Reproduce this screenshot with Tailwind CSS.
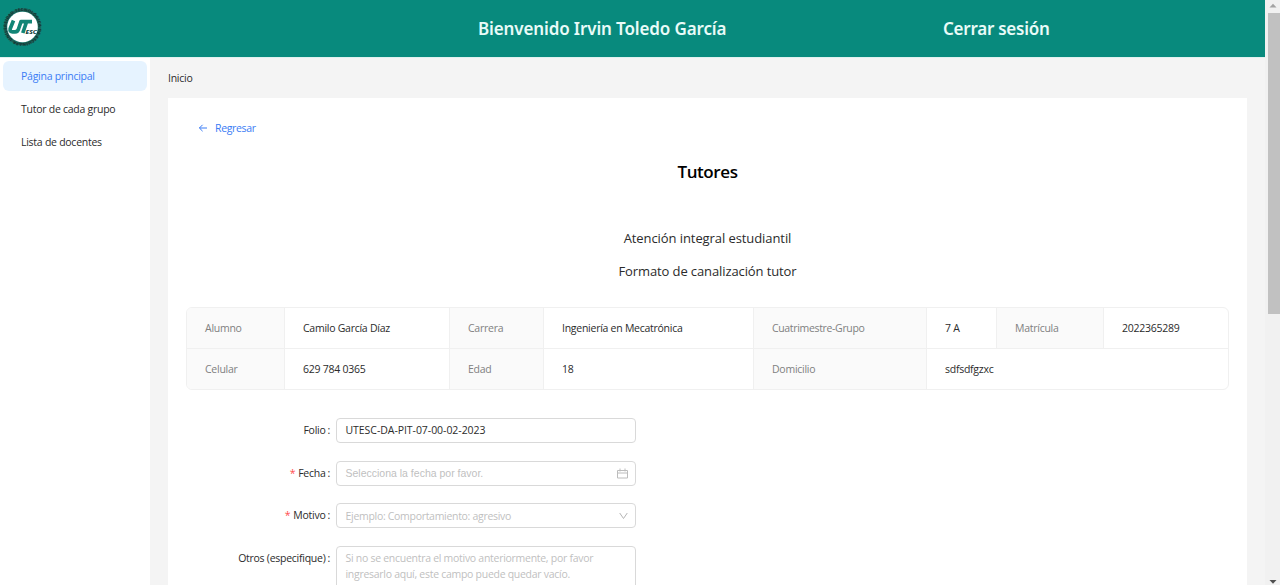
<!DOCTYPE html>
<html lang="es">
<head>
<meta charset="utf-8">
<title>Tutores</title>
<script src="https://cdn.jsdelivr.net/npm/@tailwindcss/browser@4"></script>
</head>
<body class="h-[585px] w-[1280px] overflow-hidden flex bg-[#f4f4f4] font-['Open_Sans','Noto_Sans',sans-serif] text-[10.5px] tracking-[-0.26px] leading-4 text-[#2b2b2b] whitespace-nowrap">
<div class="w-[1265px] h-full flex flex-col">
  <header class="h-[57px] shrink-0 bg-[#088a7d] flex items-center text-[#e9fbf8] text-[17px] tracking-[-0.13px] font-semibold font-['Noto_Sans',sans-serif]">
    <svg class="ml-0.5 -mt-1 w-[42px] h-[42px] shrink-0 tracking-normal" viewBox="0 0 42 42">
      <defs><path id="ring" d="M10.500 33.500A16 16 0 1 1 30.500 33.500A16 16 0 0 1 10.500 33.500"/></defs>
      <circle cx="20.500" cy="21" r="19" fill="#1b7d72"/>
      <circle cx="20.500" cy="21" r="17" fill="none" stroke="#1d5f57" stroke-width="2.500"/>
      <text font-size="4.200" font-weight="700" fill="#10332f"><textPath href="#ring" textLength="98">UNIVERSIDAD TECNOLÓGICA DE ESCUINAPA</textPath></text>
      <circle cx="20.500" cy="21" r="15.300" fill="#fff"/>
      <path d="M11.500 14.500 8.200 22.800Q7.600 25.800 10.500 25.800H13Q15.800 25.800 16.500 23L19 15.600H30M24.500 16 20.800 27" fill="none" stroke="#128576" stroke-width="3.700" stroke-linejoin="round"/>
      <text x="23.500" y="27.500" font-size="5.800" font-weight="800" font-style="italic" fill="#123f3b" textLength="11.500" lengthAdjust="spacingAndGlyphs">ESC</text>
    </svg>
    <span class="ml-[434px] w-[249px]">Bienvenido Irvin Toledo García</span>
    <span class="ml-[216px] tracking-[-0.25px]">Cerrar sesión</span>
  </header>
  <div class="flex grow min-h-0 border-t border-[#e0f1ef]">
    <aside class="w-[150px] shrink-0 bg-white pt-[3px] px-[3px] flex flex-col gap-[3px]">
      <div class="h-[30px] rounded-md bg-[#e6f3ff] text-[#3b7cf5] pl-[18px] flex items-center">Página principal</div>
      <div class="h-[30px] pl-[18px] flex items-center">Tutor de cada grupo</div>
      <div class="h-[30px] pl-[18px] flex items-center">Lista de docentes</div>
    </aside>
    <main class="grow pl-[18px] pr-[18px] flex flex-col">
      <div class="h-[40px] shrink-0 flex items-center">Inicio</div>
      <section class="grow min-h-0 bg-white px-[18px] overflow-hidden flex flex-col">
        <div class="mt-[22px] ml-3 h-4 shrink-0 flex items-center text-[#3b7cf5]">
          <svg class="w-[10px] h-[10px] mr-[7px]" viewBox="0 0 10 10" fill="none" stroke="currentColor" stroke-width="1"><path d="M9 5H1.4M4.6 1.8 1.4 5l3.2 3.2"/></svg>
          <span class="tracking-[-0.35px]">Regresar</span>
        </div>
        <h1 class="mt-[24px] h-6 shrink-0 leading-6 text-center text-[17px] tracking-[-0.4px] font-semibold text-black">Tutores</h1>
        <p class="mt-[44px] h-5 shrink-0 leading-5 text-center text-[13px] tracking-[-0.08px]">Atención integral estudiantil</p>
        <p class="mt-[13px] h-5 shrink-0 leading-5 text-center text-[13px] tracking-[-0.11px]">Formato de canalización tutor</p>
        <div class="mt-[26px] h-[83px] shrink-0 w-[1043px] rounded-md border border-[#f0f0f0] overflow-hidden grid grid-cols-[98px_165px_94px_210px_173px_70px_107px_1fr] grid-rows-[41px_1fr] *:flex *:items-center *:pl-[18px] *:border-[#f0f0f0]">
          <div class="bg-[#fafafa] text-[#808080] border-r border-b">Alumno</div>
          <div class="border-r border-b">Camilo García Díaz</div>
          <div class="bg-[#fafafa] text-[#808080] border-r border-b">Carrera</div>
          <div class="border-r border-b">Ingeniería en Mecatrónica</div>
          <div class="bg-[#fafafa] text-[#808080] tracking-[-0.34px] border-r border-b">Cuatrimestre-Grupo</div>
          <div class="border-r border-b">7 A</div>
          <div class="bg-[#fafafa] text-[#808080] border-r border-b">Matrícula</div>
          <div class="border-b">2022365289</div>
          <div class="bg-[#fafafa] text-[#808080] border-r">Celular</div>
          <div class="border-r">629 784 0365</div>
          <div class="bg-[#fafafa] text-[#808080] border-r">Edad</div>
          <div class="border-r">18</div>
          <div class="bg-[#fafafa] text-[#808080] border-r">Domicilio</div>
          <div class="col-span-3">sdfsdfgzxc</div>
        </div>
        <form class="mt-[28px] shrink-0 w-[450px] grid grid-cols-[144px_300px] gap-x-[6px] gap-y-[17.6px]">
          <label class="h-[24px] flex items-center justify-end">Folio<span class="ml-[2px]">:</span></label>
          <div class="h-[25px] border border-[#d9d9d9] rounded px-[8.5px] flex items-center tracking-[-0.05px]"><span class="-mt-px">UTESC-DA-PIT-07-00-02-2023</span></div>
          <label class="h-[24px] flex items-center justify-end"><span class="text-[#ff4d4f] mr-[3px]">*</span>Fecha<span class="ml-[2px]">:</span></label>
          <div class="h-[25px] border border-[#d9d9d9] rounded px-[8.5px] flex items-center justify-between text-[#bfbfbf] tracking-normal font-['Liberation_Sans',sans-serif]"><span>Selecciona la fecha por favor.</span>
            <svg class="w-[11px] h-[11px] mr-[-1px]" viewBox="0 0 11 11" fill="none" stroke="#bcbcbc"><path d="M.5 2.5h10v7.5H.5zM.5 5h10M3 .5v3M8 .5v3"/></svg>
          </div>
          <label class="h-[24px] flex items-center justify-end"><span class="text-[#ff4d4f] mr-[3px]">*</span>Motivo<span class="ml-[2px]">:</span></label>
          <div class="h-[25px] border border-[#d9d9d9] rounded pl-[8.5px] pr-[7px] flex items-center justify-between text-[#bfbfbf] tracking-[-0.3px]"><span>Ejemplo: Comportamiento: agresivo</span>
            <svg class="w-[9px] h-[8px]" viewBox="0 0 9 8" fill="none" stroke="#b5b5b5"><path d="M.7 1 4.5 6.500 8.300 1"/></svg>
          </div>
          <label class="h-[24px] flex items-center justify-end">Otros (especifique)<span class="ml-[2px]">:</span></label>
          <div class="h-[60px] border border-[#d9d9d9] rounded px-[8.5px] pt-[3px] text-[#bfbfbf] tracking-[-0.28px]">Si no se encuentra el motivo anteriormente, por favor<br>ingresarlo aquí, este campo puede quedar vacío.</div>
        </form>
      </section>
    </main>
  </div>
</div>
<div class="w-[15px] h-full bg-[#f1f1f1] flex flex-col items-center">
  <svg class="w-[15px] h-[13px] shrink-0" viewBox="0 0 15 13"><path d="M4.500 7.500 8 3.800l3.500 3.700z" fill="#a3a3a3"/></svg>
  <div class="w-[12px] h-[301px] ml-0.5 bg-[#c1c1c1]"></div>
  <svg class="w-[15px] h-[13px] shrink-0 mt-auto" viewBox="0 0 15 13"><path d="M4.500 8 8 11.700 11.500 8z" fill="#505050"/></svg>
</div>
</body>
</html>
